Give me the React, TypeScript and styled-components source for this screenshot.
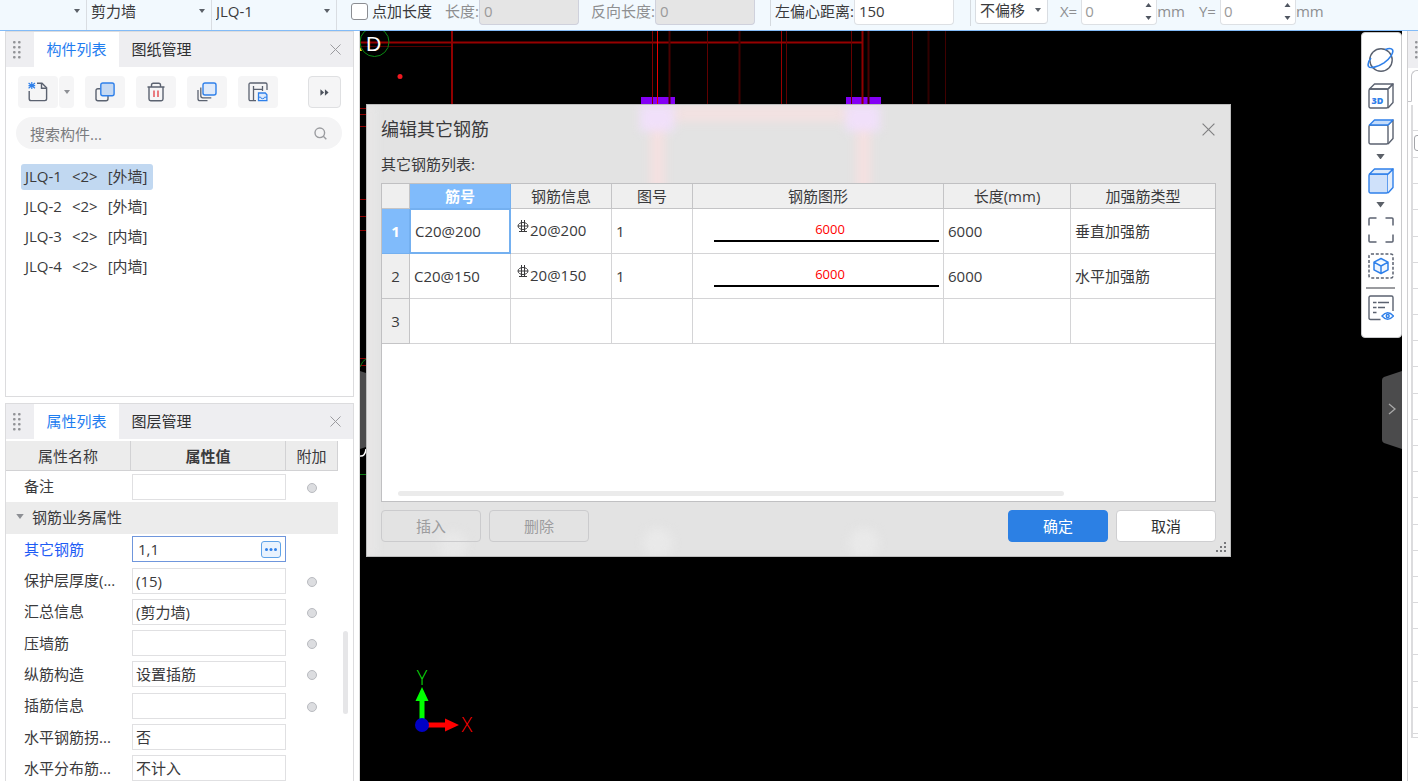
import React from "react";
import styled, { createGlobalStyle } from "styled-components";

const GlobalStyle = createGlobalStyle`
  *, *::before, *::after { box-sizing: border-box; }
  html, body { margin: 0; height: 100%; }
  body, button, input, select, table {
    font-family: "Open Sans", "Noto Sans CJK SC", sans-serif;
    font-size: 15px;
    line-height: 20px;
    color: #3a3a3c;
  }
  body { overflow: hidden; background: #fff; }
  button, input, select { margin: 0; padding: 0; border: 0; background: none; outline: none; }
  button { cursor: pointer; }
  svg { display: block; }
`;

/* ---------- shell ---------- */

const Shell = styled.div`
  display: flex;
  flex-direction: column;
  height: 100vh;
`;

const Body = styled.div`
  flex: 1;
  min-height: 0;
  display: flex;
`;

/* ---------- option bar ---------- */

const OptionBar = styled.header`
  display: flex;
  align-items: flex-start;
  height: 31px;
  background: #f2f9fe;
  border-bottom: 1px solid #83bbf7;
  white-space: nowrap;
  overflow: hidden;
`;

const SelectBox = styled.span<{ $width: number; $boxed?: boolean }>`
  display: grid;
  align-items: center;
  flex: none;
  width: ${(p) => p.$width}px;
  height: ${(p) => (p.$boxed ? 24 : 30)}px;
  padding-bottom: ${(p) => (p.$boxed ? 3 : 8)}px;
  background: ${(p) => (p.$boxed ? "#fff" : "transparent")};
  border-right: 1px solid #d9dde2;
  ${(p) =>
    p.$boxed &&
    "border-left: 1px solid #d9dde2; border-bottom: 1px solid #d4d7dc; border-radius: 0 0 4px 4px;"}

  select, svg { grid-area: 1 / 1; }
  select { appearance: none; width: 100%; padding-left: 4px; }
  svg { justify-self: end; margin-right: 6px; pointer-events: none; }
`;

const CheckLabel = styled.label`
  display: flex;
  align-items: center;
  gap: 4px;
  height: 22px;
  margin: 0 13px 0 14px;

  input {
    appearance: none;
    width: 17px;
    height: 17px;
    border: 1px solid #8b8d92;
    border-radius: 3px;
    background: #fff;
  }
`;

const OptionLabel = styled.label<{ $muted?: boolean }>`
  line-height: 22px;
  color: ${(p) => (p.$muted ? "#8e8f91" : "#3a3a3c")};
`;

const OptionInput = styled.input<{ $off?: boolean }>`
  flex: none;
  width: 100px;
  height: 25px;
  padding: 0 4px 2px;
  border: 1px solid ${(p) => (p.$off ? "#cfd1dc" : "#dde0e4")};
  border-top: 0;
  border-radius: 0 0 4px 4px;
  background: ${(p) => (p.$off ? "#e5e5e5" : "#fff")};
  color: ${(p) => (p.$off ? "#9a9a9a" : "#3a3a3c")};
`;

const Spinner = styled.span`
  display: flex;
  flex: none;
  align-items: center;
  width: 76px;
  height: 25px;
  padding: 0 4px 2px 3px;
  border: 1px solid #dde0e4;
  border-top: 0;
  border-radius: 0 0 4px 4px;
  background: #fff;

  input { flex: 1; min-width: 0; color: #9a9a9a; }
`;

const BarRule = styled.span<{ $left: number; $right: number }>`
  flex: none;
  width: 1px;
  height: 26px;
  margin: 0 ${(p) => p.$right}px 0 ${(p) => p.$left}px;
  background: #d5dadf;
`;

const Gap = styled.span<{ $w: number }>`
  flex: none;
  width: ${(p) => p.$w}px;
`;

/* ---------- left dock ---------- */

const Dock = styled.aside`
  flex: none;
  display: grid;
  grid-template-rows: minmax(0, 366fr) minmax(0, 378fr);
  gap: 6px;
  width: 360px;
  padding: 0 5px;
  border-right: 1px solid #dadada;
`;

const Panel = styled.section<{ $open?: boolean }>`
  display: flex;
  flex-direction: column;
  min-height: 0;
  overflow: hidden;
  border: 1px solid #dcdcde;
  ${(p) => p.$open && "border-bottom: 0;"}
`;

const PanelHead = styled.div`
  display: flex;
  align-items: stretch;
  flex: none;
  height: 35px;
  background: #eeeef1;
`;

const Grip = styled.span`
  display: flex;
  align-items: center;
  width: 28px;
  padding-left: 7px;
`;

const Tab = styled.button<{ $active?: boolean }>`
  width: 85px;
  padding-bottom: 1px;
  background: ${(p) => (p.$active ? "#fff" : "transparent")};
  color: ${(p) => (p.$active ? "#1f7df0" : "#303032")};
`;

const CloseButton = styled.button`
  display: flex;
  align-items: center;
  justify-content: center;
  width: 28px;
  margin: 0 4px 0 auto;
`;

const Tools = styled.div`
  display: flex;
  align-items: center;
  gap: 11px;
  margin: 9px 12px 0;
`;

const ToolPair = styled.span`
  display: flex;
  gap: 1px;
`;

const ToolButton = styled.button<{ $width?: number; $framed?: boolean }>`
  display: flex;
  align-items: center;
  justify-content: center;
  width: ${(p) => p.$width ?? 40}px;
  height: 32px;
  border-radius: 4px;
  background: #f5f5f6;
  ${(p) => p.$framed && "margin-left: auto; border: 1px solid #dfe0e2;"}
`;

const Search = styled.label`
  display: flex;
  align-items: center;
  height: 32px;
  margin: 9px 11px 0 10px;
  padding: 1px 15px 0 14px;
  border-radius: 16px;
  background: #f4f4f5;

  input { flex: 1; min-width: 0; }
  input::placeholder { color: #7b7c7f; opacity: 1; }
`;

const ItemList = styled.ul`
  display: flex;
  flex-direction: column;
  align-items: flex-start;
  gap: 4px;
  margin: 15px 0 0;
  padding: 0 15px;
  list-style: none;
`;

const Item = styled.button<{ $active?: boolean }>`
  display: flex;
  align-items: center;
  gap: 10px;
  height: 26px;
  padding: 0 5px 2px 4px;
  border-radius: 3px;
  background: ${(p) => (p.$active ? "#c1d8f1" : "transparent")};
`;

const PropArea = styled.div`
  display: flex;
  flex: 1;
  min-height: 0;
  overflow: hidden;
  margin-top: 2px;
`;

const PropTable = styled.table`
  flex: none;
  align-self: flex-start;
  table-layout: fixed;
  width: 332px;
  height: 343px;
  border-collapse: separate;
  border-spacing: 0;

  th, td { padding: 0; font-weight: 400; text-align: left; }
  thead th {
    height: 30px;
    background: #ececec;
    border-right: 1px solid #d2d2d4;
    border-bottom: 1px solid #d2d2d4;
    text-align: center;
  }
  thead th:nth-child(2) { font-weight: 700; }
  tbody tr { height: 31px; }
  tbody th { padding: 0 0 1px 18px; white-space: nowrap; }
  tbody td:nth-child(2) { padding: 0 0 0 1px; }
  tbody td:last-child { padding-bottom: 2px; text-align: center; }
`;

const GroupCell = styled.td`
  background: #ececec;

  button { display: flex; align-items: center; gap: 8px; margin-left: 10px; }
`;

const PropLabel = styled.label<{ $active?: boolean }>`
  color: ${(p) => (p.$active ? "#1f5cf5" : "#3a3a3c")};
`;

const PropField = styled.span<{ $active?: boolean }>`
  display: flex;
  align-items: center;
  width: 154px;
  height: 26px;
  padding: 0 4px 0 ${(p) => (p.$active ? 5 : 3)}px;
  border: 1px solid ${(p) => (p.$active ? "#6f96dc" : "#e0e0e2")};
  background: #fff;

  input { flex: 1; min-width: 0; }
`;

const MoreButton = styled.button`
  display: flex;
  align-items: center;
  justify-content: center;
  width: 20px;
  height: 17px;
  border: 1px solid #5fa3e8;
  border-radius: 3px;
  background: #e9f3fe;
`;

const Dot = styled.input`
  appearance: none;
  width: 10px;
  height: 10px;
  border: 1px solid #b9bbc0;
  border-radius: 50%;
  background: #dcdde0;
  vertical-align: middle;
`;

const PropScroll = styled.div`
  display: flex;
  flex: 1;
  justify-content: center;
  padding-top: 190px;

  &::before {
    content: "";
    width: 5px;
    height: 83px;
    border-radius: 3px;
    background: #e6e6e8;
  }
`;

/* ---------- drawing area ---------- */

const Canvas = styled.main`
  position: relative;
  flex: 1;
  min-width: 0;
  overflow: hidden;
  background: #000;
`;

const Drawing = styled.svg`
  position: absolute;
  inset: 0;
  width: 100%;
  height: 100%;
`;

const Axes = styled.svg`
  position: absolute;
  left: 40px;
  bottom: 40px;
`;

const SideHandle = styled.button<{ $side: "left" | "right" }>`
  position: absolute;
  top: 340px;
  ${(p) => p.$side}: 0;
`;

const ViewBar = styled.nav`
  position: absolute;
  top: 1px;
  right: 0;
  display: flex;
  flex-direction: column;
  align-items: center;
  width: 41px;
  height: 306px;
  padding: 13px 2px 0 0;
  border: 1px solid #c9cacc;
  border-radius: 4px;
  background: #fff;
`;

const ViewButton = styled.button<{ $h?: number }>`
  display: flex;
  align-items: center;
  justify-content: center;
  width: 30px;
  height: ${(p) => p.$h ?? 38}px;
`;

const ViewRule = styled.hr`
  width: 29px;
  height: 2px;
  margin: 0;
  border: 0;
  background: #9a9b9f;
`;

/* ---------- dialog ---------- */

const Dialog = styled.section`
  position: absolute;
  left: 6px;
  top: 73px;
  display: flex;
  flex-direction: column;
  width: 865px;
  height: 453px;
  padding: 0 14px 14px;
  border: 1px solid #bdbdbd;
  background: #e3e3e3;
  overflow: hidden;

  > * { position: relative; }
`;

const Glow = styled.svg`
  && { position: absolute; }
  left: 0;
  top: 0;
  width: 100%;
  height: 100%;
  filter: blur(5px);
`;

const DialogHead = styled.div`
  display: flex;
  align-items: center;
  justify-content: space-between;
  height: 48px;

  h1 { margin: 0; font-size: 18px; line-height: 24px; font-weight: 400; }
  button { display: flex; justify-content: center; width: 16px; }
`;

const Caption = styled.p`
  margin: 0;
  height: 30px;
  line-height: 22px;
`;

const GridBox = styled.div`
  display: flex;
  flex: 1;
  flex-direction: column;
  justify-content: space-between;
  min-height: 0;
  border: 1px solid #c0c0c2;
  background: #fff;
`;

const Grid = styled.table`
  table-layout: fixed;
  width: 100%;
  border-collapse: separate;
  border-spacing: 0;

  th, td {
    padding: 0 4px;
    border-right: 1px solid #d4d4d6;
    border-bottom: 1px solid #d4d4d6;
    font-weight: 400;
    text-align: left;
  }
  th { background: #efefef; text-align: center; border-color: #c4c4c6; }
  td { padding-bottom: 1px; }
  thead tr { height: 25px; }
  tbody tr { height: 45px; }
  tr > :last-child { border-right: 0; }
`;

const HotHead = styled.th`
  &&& { background: #80bbfb; border-color: #74b0f0; color: #fff; font-weight: 700; }
`;

const HotCell = styled.td`
  &&& { box-shadow: inset 0 0 0 1px #74b0f0; border-color: #74b0f0; padding-left: 5px; }
`;

const Spec = styled.span`
  display: flex;
  align-items: flex-start;
  gap: 1px;
  margin: 0 0 2px 2px;
`;

const Bar = styled.span`
  display: block;
  margin: 0 0 2px 17px;
  padding-left: 7px;
  border-bottom: 2px solid #000;
  color: #ff0000;
  font-size: 13px;
  line-height: 22px;
  text-align: center;
`;

const HScroll = styled.div`
  width: 80%;
  height: 5px;
  margin: 0 0 5px 16px;
  border-radius: 3px;
  background: #ebebeb;
`;

const Actions = styled.div`
  display: flex;
  gap: 8px;
  margin-top: 8px;
`;

const ActionButton = styled.button<{ $kind?: "primary" | "plain" }>`
  width: 100px;
  height: 32px;
  border-radius: 4px;
  border: 1px solid
    ${(p) => (p.$kind === "primary" ? "#2c80e4" : p.$kind === "plain" ? "#cfcfd1" : "#cbcbcd")};
  background: ${(p) =>
    p.$kind === "primary" ? "#2c80e4" : p.$kind === "plain" ? "#fff" : "transparent"};
  color: ${(p) => (p.$kind === "primary" ? "#fff" : p.$kind === "plain" ? "#303032" : "#9c9c9e")};
  ${(p) => p.$kind === "primary" && "margin-left: auto;"}
`;

const ResizeGrip = styled.svg`
  && { position: absolute; }
  right: 3px;
  bottom: 3px;
`;

/* ---------- right dock ---------- */

const EdgeDock = styled.aside`
  flex: none;
  display: flex;
  flex-direction: column;
  width: 16px;
  overflow: hidden;
  padding-left: 5px;
`;

const EdgeFrame = styled.div`
  flex: 1;
  display: flex;
  flex-direction: column;
  border-left: 1px solid #cfcfd1;
`;

const EdgeHead = styled.div`
  display: flex;
  align-items: center;
  height: 37px;
  padding-left: 7px;
  background: #eeeef1;
`;

const EdgeTab = styled.div`
  height: 32px;
  margin: 2px 0 3px;
  border-bottom: 1px solid #c4c4c8;

  &::before {
    content: "";
    display: block;
    height: 32px;
    margin-left: 3px;
    border: 1px solid #c4c4c8;
    border-right: 0;
    border-bottom-color: #fff;
    border-radius: 6px 0 0 0;
  }
`;

const EdgeRows = styled.div`
  flex: 1;
  display: grid;
  grid-template-rows: 26px 27px repeat(22, 1fr) 4px;
  margin: 0 0 43px 3px;
  border-left: 2px solid #dcdcde;

  i { border-bottom: 1px solid #d9d9db; overflow: hidden; }
  i input {
    appearance: none;
    width: 16px;
    height: 16px;
    margin: 4px 0 0 1px;
    border: 1px solid #a3a4a8;
    border-radius: 3px;
  }
`;

/* ---------- icons ---------- */

const INK = "#5b6270";
const BLUE = "#2f80ea";

const Caret = ({ w = 6, color = "#5b6068" }: { w?: number; color?: string }) => (
  <svg width={w} height={w / 2 + 1} viewBox="0 0 6 4" fill={color}><path d="M0 0h6L3 4z" /></svg>
);

const Cross = ({ size = 11, color = "#9b9b9f" }: { size?: number; color?: string }) => (
  <svg width={size} height={size} viewBox="0 0 11 11" stroke={color} strokeWidth="1"><path d="M.5.5l10 10M10.5.5l-10 10" /></svg>
);

const GripDots = () => (
  <svg width="8" height="18" fill="#929397">
    {[0, 5, 10, 15].map((y) => (
      <React.Fragment key={y}>
        <rect x="0" y={y} width="2.600" height="2.600" rx="1" />
        <rect x="5" y={y} width="2.600" height="2.600" rx="1" />
      </React.Fragment>
    ))}
  </svg>
);

const SpinArrows = () => (
  <svg width="7" height="17" viewBox="0 0 7 17" fill="#4f5560"><path d="M.5 4h6L3.500 0zM.5 13h6l-3 4z" /></svg>
);

const NewIcon = () => (
  <svg width="20" height="20" viewBox="0 0 20 20" fill="none" stroke={INK} strokeWidth="1.4">
    <path d="M9 1.200h5l4.600 4.600v11q0 1.800-1.800 1.800H3q-1.800 0-1.800-1.800V9" />
    <path d="M13.500 1.500v4.800h4.800" />
    <path d="M3.800 0v7M.6 1l6.400 5.200M7 1L.6 6.200M.5 3.600h6.700" stroke={BLUE} strokeWidth="1.200" />
  </svg>
);

const CopyIcon = () => (
  <svg width="20" height="20" viewBox="0 0 20 20" fill="none" strokeWidth="1.400">
    <path d="M5.500 6.700H3Q1 6.700 1 8.700v8q0 2 2 2h8q2 0 2-2v-3" stroke={INK} />
    <rect x="5.800" y="1" width="13.300" height="12.800" rx="2" fill="#c5d9f3" stroke={BLUE} />
  </svg>
);

const TrashIcon = () => (
  <svg width="20" height="20" viewBox="0 0 20 20" fill="none" stroke={INK} strokeWidth="1.400">
    <path d="M1.500 5h17M3 5v12q0 1.700 1.700 1.700h10.600q1.700 0 1.700-1.700V5M5.500 4.800V3q0-1.800 1.800-1.800h5.400q1.800 0 1.800 1.800v1.800" />
    <path d="M8 8.500v6.500M12 8.500v6.500" stroke="#e5484d" />
  </svg>
);

const LayersIcon = () => (
  <svg width="20" height="20" viewBox="0 0 20 20" fill="none" strokeWidth="1.300">
    <path d="M3.800 5.500v8.300q0 2 2 2h8.500M1 8v8.700q0 2 2 2h7.500" stroke={INK} />
    <rect x="6" y="1" width="13" height="12" rx="2" fill="#dfeafa" stroke={BLUE} strokeWidth="1.400" />
  </svg>
);

const SaveLayoutIcon = () => (
  <svg width="20" height="20" viewBox="0 0 20 20" fill="none" stroke={INK} strokeWidth="1.300">
    <path d="M8 18.600H2.500Q1 18.600 1 17.100V2.500Q1 1 2.500 1h15Q19 1 19 2.500V8" />
    <path d="M5.500 4v15M14.500 4v5M5.500 7.300h9" />
    <path d="M10.500 11h6.800l1.600 1.700v6h-8.400z" fill="#dceafd" stroke={BLUE} />
    <path d="M10.500 15.200h2.200q0 1.500 1.900 1.500t1.900-1.500h2.300" stroke={BLUE} strokeWidth="1" />
  </svg>
);

const MoreIcon = () => (
  <svg width="9" height="7" viewBox="0 0 11 8" fill="#4d535d"><path d="M.5 0L5 4 .5 8zM6 0l4.500 4L6 8z" /></svg>
);

const SearchIcon = () => (
  <svg width="13" height="13" viewBox="0 0 13 13" fill="none" stroke="#9b9ca0" strokeWidth="1.400"><circle cx="5.800" cy="5.800" r="4.800" /><path d="M9.300 9.300l3 3" /></svg>
);

const RebarMark = () => (
  <svg width="12" height="14" viewBox="0 0 12 14" fill="none" stroke="#3a3a3c" strokeWidth="1">
    <ellipse cx="6" cy="6" rx="5" ry="3.500" />
    <path d="M4.500 0v11.500M7.500 0v11.500M1 6h10M2 11.500h8" />
  </svg>
);

const OrbitIcon = () => (
  <svg width="28" height="26" viewBox="0 0 28 26" fill="none" stroke={INK} strokeWidth="1.400">
    <circle cx="14" cy="13" r="11.200" />
    <path d="M18 2.800c3.500-1.500 6.500-1.500 7.500 0 1.400 2.600-2 8.500-8.500 13C10.500 20 3 22 1.500 19.300.6 17.300 1.600 14 4 11" stroke={BLUE} strokeWidth="1.600" />
  </svg>
);

const CubeIcon = ({ mode }: { mode: "3d" | "top" | "solid" }) => {
  const line = mode === "solid" ? BLUE : INK;
  return (
    <svg width="26" height="26" viewBox="0 0 26 26" fill="none" stroke={line} strokeWidth="1.400" strokeLinejoin="round">
      <rect x="1" y="6" width="19" height="19" rx="1.500" fill={mode === "solid" ? "#cfe1fa" : "#fff"} />
      <path d="M20 6l5-5v18.500l-5 5.500" fill={mode === "solid" ? "#e3edfb" : "none"} />
      <path
        d="M1.500 6L6.500 1H25l-5 5z"
        fill={mode === "top" ? "#c5dcfa" : mode === "solid" ? "#dceafb" : "none"}
        stroke={mode === "3d" ? INK : BLUE}
      />
      {mode === "3d" && (
        <text x="3.500" y="21" fontSize="9" fontWeight="800" fill={BLUE} stroke="none">3D</text>
      )}
    </svg>
  );
};

const FrameIcon = () => (
  <svg width="26" height="26" viewBox="0 0 26 26" fill="none" stroke={INK} strokeWidth="1.500">
    <path d="M1 8.500V2q0-1 1-1h6.500M17.500 1H24q1 0 1 1v6.500M25 17.500V24q0 1-1 1h-6.500M8.500 25H2q-1 0-1-1v-6.500" />
  </svg>
);

const BoxedCubeIcon = () => (
  <svg width="26" height="26" viewBox="0 0 26 26" fill="none" strokeWidth="1.500" strokeLinejoin="round">
    <rect x="1" y="1" width="24" height="24" rx="2" stroke={INK} strokeDasharray="3 1.800" />
    <path d="M13 5.500l7 3.700v7.600l-7 3.700-7-3.700V9.200zM6 9.200l7 3.800 7-3.800M13 13v7.500" stroke={BLUE} fill="#eef5fe" />
  </svg>
);

const ListEyeIcon = () => (
  <svg width="26" height="26" viewBox="0 0 26 26" fill="none" stroke={INK} strokeWidth="1.400">
    <path d="M12.500 24.500H2.500Q1 24.500 1 23V2.500Q1 1 2.500 1h21Q25 1 25 2.500V16" />
    <path d="M5 7.500h3.500M10 7.500h11M5 12.500h3.500M10 12.500h7M5 17.500h3.500" />
    <path d="M14 21q5.500-6.500 11.500 0-6 6.500-11.500 0z" stroke={BLUE} fill="#fff" />
    <circle cx="19.700" cy="21" r="1.500" stroke={BLUE} />
  </svg>
);

const HandleShape = ({ side }: { side: "left" | "right" }) => (
  <svg width="20" height="78" viewBox="0 0 20 78" fill="none">
    <path
      d={side === "right" ? "M20 0L2 6Q0 7 0 9v60q0 2 2 3l18 6z" : "M0 0l18 6q2 1 2 3v60q0 2-2 3L0 78z"}
      fill="#4b4b4c"
    />
    <path d={side === "right" ? "M7 33l6 5-6 5" : "M13 33l-6 5 6 5"} stroke="#a9a9a9" strokeWidth="1.300" />
  </svg>
);

/* ---------- data ---------- */

const walls = [
  ["JLQ-1", "<2>", "[外墙]"],
  ["JLQ-2", "<2>", "[外墙]"],
  ["JLQ-3", "<2>", "[内墙]"],
  ["JLQ-4", "<2>", "[内墙]"],
];

type Prop = { name: string; value: string; dot?: boolean; active?: boolean };

const props: Prop[] = [
  { name: "其它钢筋", value: "1,1", active: true },
  { name: "保护层厚度(...", value: "(15)", dot: true },
  { name: "汇总信息", value: "(剪力墙)", dot: true },
  { name: "压墙筋", value: "", dot: true },
  { name: "纵筋构造", value: "设置插筋", dot: true },
  { name: "插筋信息", value: "", dot: true },
  { name: "水平钢筋拐...", value: "否" },
  { name: "水平分布筋...", value: "不计入" },
];

const gridLines: [number, string, number][] = [
  [292, "#800000", 1], [297, "#e80000", 1], [309, "#480000", 2], [347, "#600000", 1],
  [379, "#400000", 2], [421, "#9c0000", 1], [426, "#600000", 1], [491, "#680000", 1],
  [502, "#900000", 2], [508, "#480000", 2], [552, "#600000", 1], [568, "#300000", 2], [585, "#400000", 1],
];

/* ---------- components ---------- */

const PropRow = ({ row }: { row: Prop }) => {
  const id = `prop-${row.name}`;
  return (
    <tr>
      <th scope="row"><PropLabel htmlFor={id} $active={row.active}>{row.name}</PropLabel></th>
      <td>
        <PropField $active={row.active}>
          <input id={id} defaultValue={row.value} />
          {row.active && (
            <MoreButton aria-label="更多">
              <svg width="12" height="3" fill={BLUE}><circle cx="1.500" cy="1.500" r="1.500" /><circle cx="6" cy="1.500" r="1.500" /><circle cx="10.500" cy="1.500" r="1.500" /></svg>
            </MoreButton>
          )}
        </PropField>
      </td>
      <td>{row.dot && <Dot type="checkbox" aria-label={`附加 ${row.name}`} />}</td>
    </tr>
  );
};

const Options = () => (
  <OptionBar>
    <SelectBox $width={87}><select aria-label="楼层"><option></option></select><Caret /></SelectBox>
    <SelectBox $width={125}><select aria-label="构件类型"><option>剪力墙</option></select><Caret /></SelectBox>
    <SelectBox $width={125}><select aria-label="构件"><option>JLQ-1</option></select><Caret /></SelectBox>
    <CheckLabel><input type="checkbox" />点加长度</CheckLabel>
    <OptionLabel $muted htmlFor="len">长度:</OptionLabel>
    <OptionInput id="len" $off disabled defaultValue="0" />
    <Gap $w={12} />
    <OptionLabel $muted htmlFor="rev">反向长度:</OptionLabel>
    <OptionInput id="rev" $off disabled defaultValue="0" />
    <BarRule $left={15} $right={4} />
    <OptionLabel htmlFor="off">左偏心距离:</OptionLabel>
    <OptionInput id="off" defaultValue="150" />
    <BarRule $left={16} $right={4} />
    <SelectBox $width={73} $boxed><select aria-label="偏移方式"><option>不偏移</option></select><Caret /></SelectBox>
    <Gap $w={12} />
    <OptionLabel $muted htmlFor="dx">X=</OptionLabel>
    <Gap $w={4} />
    <Spinner><input id="dx" defaultValue="0" /><SpinArrows /></Spinner>
    <OptionLabel $muted as="span">mm</OptionLabel>
    <Gap $w={14} />
    <OptionLabel $muted htmlFor="dy">Y=</OptionLabel>
    <Gap $w={4} />
    <Spinner><input id="dy" defaultValue="0" /><SpinArrows /></Spinner>
    <OptionLabel $muted as="span">mm</OptionLabel>
  </OptionBar>
);

const ComponentPanel = () => (
  <Panel>
    <PanelHead>
      <Grip><GripDots /></Grip>
      <Tab $active>构件列表</Tab>
      <Tab>图纸管理</Tab>
      <CloseButton aria-label="关闭"><Cross /></CloseButton>
    </PanelHead>
    <Tools>
      <ToolPair>
        <ToolButton aria-label="新建"><NewIcon /></ToolButton>
        <ToolButton aria-label="新建选项" $width={15}><Caret color="#8d8f94" /></ToolButton>
      </ToolPair>
      <ToolButton aria-label="复制"><CopyIcon /></ToolButton>
      <ToolButton aria-label="删除构件"><TrashIcon /></ToolButton>
      <ToolButton aria-label="层间复制"><LayersIcon /></ToolButton>
      <ToolButton aria-label="存档"><SaveLayoutIcon /></ToolButton>
      <ToolButton aria-label="展开" $width={33} $framed><MoreIcon /></ToolButton>
    </Tools>
    <Search><input placeholder="搜索构件..." aria-label="搜索构件" /><SearchIcon /></Search>
    <ItemList>
      {walls.map(([name, count, kind], i) => (
        <li key={name}>
          <Item $active={i === 0}><span>{name}</span><span>{count}</span><span>{kind}</span></Item>
        </li>
      ))}
    </ItemList>
  </Panel>
);

const PropertyPanel = () => (
  <Panel $open>
    <PanelHead>
      <Grip><GripDots /></Grip>
      <Tab $active>属性列表</Tab>
      <Tab>图层管理</Tab>
      <CloseButton aria-label="关闭"><Cross /></CloseButton>
    </PanelHead>
    <PropArea>
      <PropTable>
        <colgroup><col width="125" /><col width="155" /><col width="52" /></colgroup>
        <thead><tr><th scope="col">属性名称</th><th scope="col">属性值</th><th scope="col">附加</th></tr></thead>
        <tbody>
          <PropRow row={{ name: "备注", value: "", dot: true }} />
          <tr>
            <GroupCell colSpan={3}><button><Caret w={8} color="#8d8f94" />钢筋业务属性</button></GroupCell>
          </tr>
          {props.map((p) => <PropRow key={p.name} row={p} />)}
        </tbody>
      </PropTable>
      <PropScroll />
    </PropArea>
  </Panel>
);

const RebarDialog = () => (
  <Dialog role="dialog" aria-labelledby="dlg-title">
    <Glow>
      <rect x="308" y="0" width="170" height="17" fill="#f2e1e1" />
      <rect x="283" y="10" width="15" height="80" fill="#f4e0e0" />
      <rect x="489" y="10" width="15" height="80" fill="#f4e0e0" />
      <rect x="273" y="-8" width="34" height="34" fill="#f1e0fa" />
      <rect x="479" y="-8" width="34" height="34" fill="#f1e0fa" />
      <rect x="-10" y="-10" width="18" height="480" fill="#e9e8e8" />
      <circle cx="86" cy="440" r="14" fill="#e8e8e8" />
      <circle cx="291" cy="438" r="15" fill="#e9e9e9" />
      <circle cx="497" cy="438" r="15" fill="#e9e9e9" />
    </Glow>
    <DialogHead>
      <h1 id="dlg-title">编辑其它钢筋</h1>
      <button aria-label="关闭"><Cross size={13} color="#808082" /></button>
    </DialogHead>
    <Caption>其它钢筋列表:</Caption>
    <GridBox>
      <Grid>
        <colgroup>
          <col width="28" /><col width="101" /><col width="101" /><col width="81" /><col width="251" /><col width="127" /><col />
        </colgroup>
        <thead>
          <tr>
            <th></th><HotHead>筋号</HotHead><th>钢筋信息</th><th>图号</th><th>钢筋图形</th><th>长度(mm)</th><th>加强筋类型</th>
          </tr>
        </thead>
        <tbody>
          <tr>
            <HotHead>1</HotHead>
            <HotCell>C20@200</HotCell>
            <td><Spec><RebarMark />20@200</Spec></td>
            <td>1</td>
            <td><Bar>6000</Bar></td>
            <td>6000</td>
            <td>垂直加强筋</td>
          </tr>
          <tr>
            <th>2</th>
            <td>C20@150</td>
            <td><Spec><RebarMark />20@150</Spec></td>
            <td>1</td>
            <td><Bar>6000</Bar></td>
            <td>6000</td>
            <td>水平加强筋</td>
          </tr>
          <tr><th>3</th><td /><td /><td /><td /><td /><td /></tr>
        </tbody>
      </Grid>
      <HScroll />
    </GridBox>
    <Actions>
      <ActionButton disabled>插入</ActionButton>
      <ActionButton disabled>删除</ActionButton>
      <ActionButton $kind="primary">确定</ActionButton>
      <ActionButton $kind="plain">取消</ActionButton>
    </Actions>
    <ResizeGrip width="11" height="11" fill="#77787b">
      <path d="M8 0h2v2H8zM8 4h2v2H8zM8 8h2v2H8zM4 4h2v2H4zM4 8h2v2H4zM0 8h2v2H0z" />
    </ResizeGrip>
  </Dialog>
);

const DrawingArea = () => (
  <Canvas>
    <Drawing fill="none">
      <path d="M0 11.500h503" stroke="#960000" strokeWidth="2" />
      <path d="M0 15.500h92" stroke="#500000" />
      <path d="M92 0v73" stroke="#900000" strokeWidth="2" />
      <rect x="281" y="66" width="34" height="8" fill="#8400f5" />
      <rect x="486" y="66" width="35" height="8" fill="#8400f5" />
      {gridLines.map(([x, color, w]) => <path key={x} d={`M${x + 0.5} 0v74`} stroke={color} strokeWidth={w} />)}
      <path d="M0 77.500h8M0 83.500h8M0 95.500h8M0 168.500h8M0 185.500h8M0 199.500h8M0 327.500h8M0 334.500h8" stroke="#8c0000" />
      <path d="M0 336q2-6 7-9M0 443.500h8" stroke="#0a7a12" />
      <path d="M0 425q5 1 6-7" stroke="#fff" strokeWidth="1.500" />
      <circle cx="40" cy="45.500" r="2.500" fill="#f01820" />
      <circle cx="14.500" cy="11" r="14.500" stroke="#0a8a12" />
      <path d="M0 16l2 4H0z" fill="#f5e614" />
      <text x="6" y="20" fontSize="21" fill="#fff" fontFamily="Liberation Sans">D</text>
    </Drawing>
    <Axes width="80" height="80" viewBox="0 0 80 80">
      <text x="22" y="24" fontSize="20" textAnchor="middle" fill="#0bd80b" fontFamily="Open Sans" fontWeight="300">Y</text>
      <text x="67" y="71" fontSize="20" textAnchor="middle" fill="#f00" fontFamily="Open Sans" fontWeight="300">X</text>
      <path d="M22 26l6.500 14h-4v18h-5V40h-4z" fill="#0f0" />
      <path d="M59 64l-14-6.500v4H28v5h17v4z" fill="#f00" />
      <circle cx="22" cy="64" r="7" fill="#0000c4" />
    </Axes>
    <SideHandle $side="left" aria-label="收起左侧"><HandleShape side="left" /></SideHandle>
    <SideHandle $side="right" aria-label="展开右侧"><HandleShape side="right" /></SideHandle>
    <ViewBar>
      <ViewButton aria-label="动态观察" $h={27}><OrbitIcon /></ViewButton>
      <ViewButton aria-label="三维" $h={45}><CubeIcon mode="3d" /></ViewButton>
      <ViewButton aria-label="俯视" $h={28}><CubeIcon mode="top" /></ViewButton>
      <ViewButton aria-label="视图选项" $h={21}><Caret w={9} /></ViewButton>
      <ViewButton aria-label="实体" $h={28}><CubeIcon mode="solid" /></ViewButton>
      <ViewButton aria-label="显示选项" $h={20}><Caret w={9} /></ViewButton>
      <ViewButton aria-label="全屏" $h={29}><FrameIcon /></ViewButton>
      <ViewButton aria-label="局部三维" $h={43}><BoxedCubeIcon /></ViewButton>
      <ViewRule />
      <ViewButton aria-label="显示设置"><ListEyeIcon /></ViewButton>
    </ViewBar>
    <RebarDialog />
  </Canvas>
);

export default function App() {
  return (
    <>
      <GlobalStyle />
      <Shell>
        <Options />
        <Body>
          <Dock>
            <ComponentPanel />
            <PropertyPanel />
          </Dock>
          <DrawingArea />
          <EdgeDock>
            <EdgeFrame>
              <EdgeHead><GripDots /></EdgeHead>
              <EdgeTab />
              <EdgeRows>
                <i />
                <i><input type="checkbox" aria-label="全选" /></i>
                {Array.from({ length: 22 }, (_, i) => <i key={i} />)}
                <i />
              </EdgeRows>
            </EdgeFrame>
          </EdgeDock>
        </Body>
      </Shell>
    </>
  );
}
